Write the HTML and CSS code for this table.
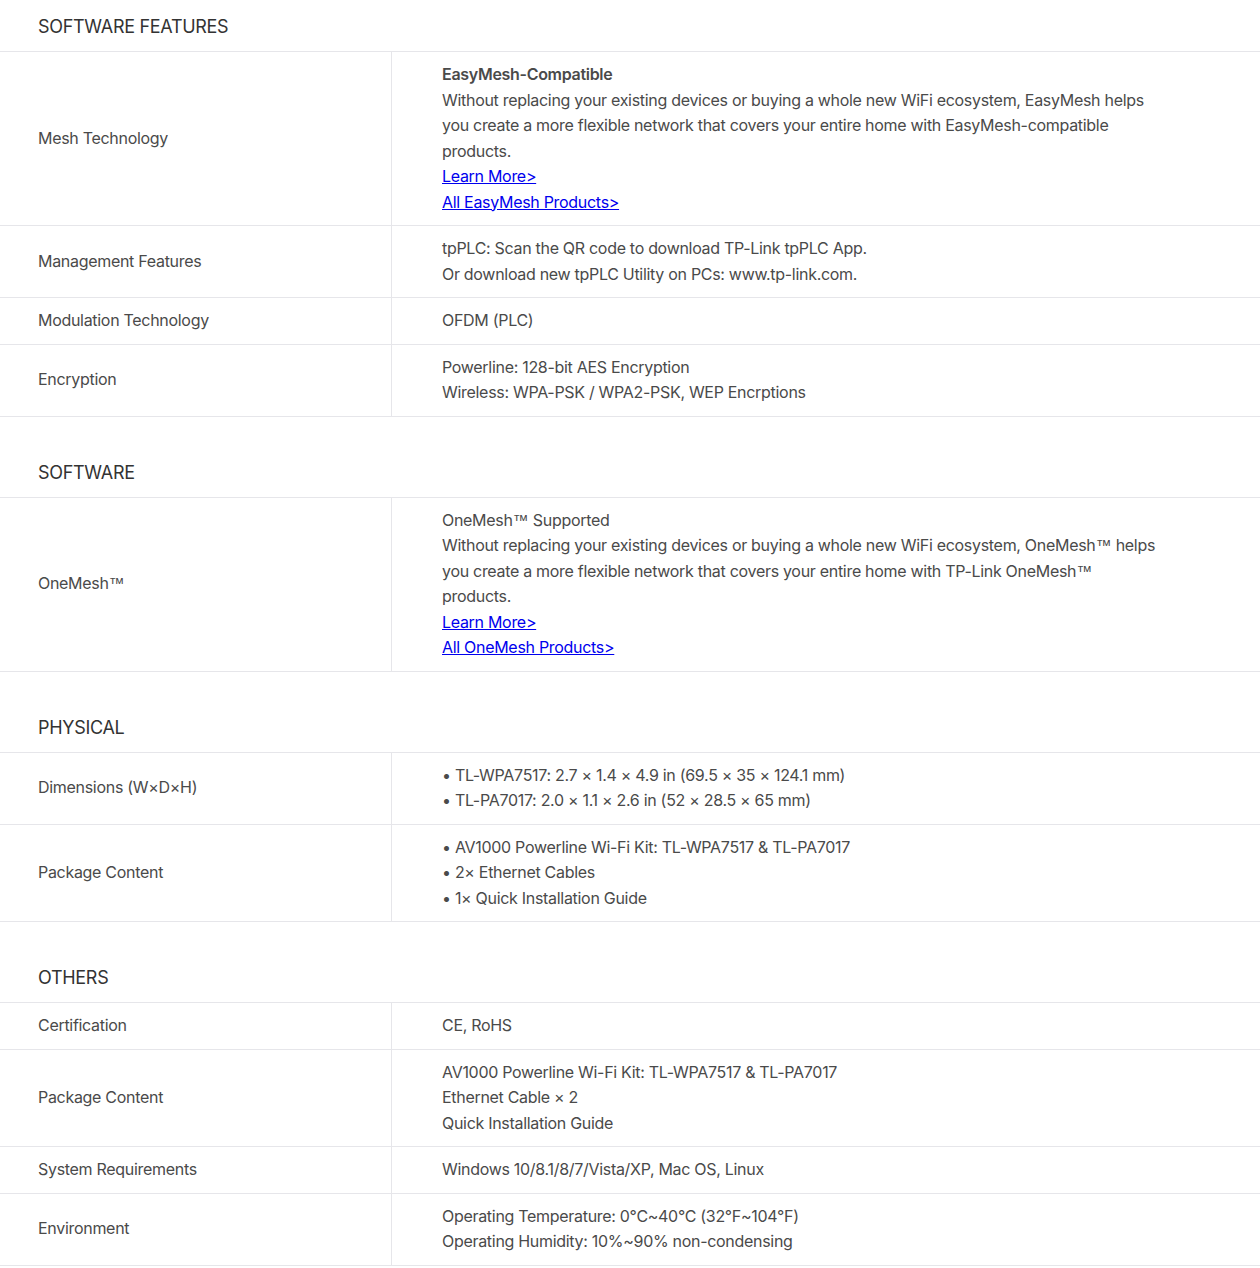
FILE: index.html
```html
<!DOCTYPE html>
<html lang="en">
<head>
    <meta charset="UTF-8">
    <meta name="viewport" content="width=device-width, initial-scale=1.0">
    <title>Specifications</title>
    <link rel="stylesheet" href="styles.css">
</head>
<body>
    <div class="specs">
        <section class="spec-group">
            <h3>SOFTWARE FEATURES</h3>
            <div class="spec-table">
                <div class="spec-row">
                    <div class="spec-name">Mesh Technology</div>
                    <div class="spec-value">
                        <strong>EasyMesh-Compatible</strong><br>
                        Without replacing your existing devices or buying a whole new WiFi ecosystem, EasyMesh helps you create a more flexible network that covers your entire home with EasyMesh-compatible products.<br>
                        <a href="#">Learn More&gt;</a><br>
                        <a href="#">All EasyMesh Products&gt;</a>
                    </div>
                </div>
                <div class="spec-row">
                    <div class="spec-name">Management Features</div>
                    <div class="spec-value">
                        tpPLC: Scan the QR code to download TP-Link tpPLC App.<br>
                        Or download new tpPLC Utility on PCs: www.tp-link.com.
                    </div>
                </div>
                <div class="spec-row">
                    <div class="spec-name">Modulation Technology</div>
                    <div class="spec-value">OFDM (PLC)</div>
                </div>
                <div class="spec-row">
                    <div class="spec-name">Encryption</div>
                    <div class="spec-value">
                        Powerline: 128-bit AES Encryption<br>
                        Wireless: WPA-PSK / WPA2-PSK, WEP Encrptions
                    </div>
                </div>
            </div>
        </section>

        <section class="spec-group">
            <h3>SOFTWARE</h3>
            <div class="spec-table">
                <div class="spec-row">
                    <div class="spec-name">OneMesh<span class="tm">™</span></div>
                    <div class="spec-value">
                        OneMesh<span class="tm">™</span> Supported<br>
                        Without replacing your existing devices or buying a whole new WiFi ecosystem, OneMesh<span class="tm">™</span> helps you create a more flexible network that covers your entire home with TP-Link OneMesh<span class="tm">™</span> products.<br>
                        <a href="#">Learn More&gt;</a><br>
                        <a href="#">All OneMesh Products&gt;</a>
                    </div>
                </div>
            </div>
        </section>

        <section class="spec-group">
            <h3>PHYSICAL</h3>
            <div class="spec-table">
                <div class="spec-row">
                    <div class="spec-name">Dimensions (W×D×H)</div>
                    <div class="spec-value">
                        • TL-WPA7517: 2.7 × 1.4 × 4.9 in (69.5 × 35 × 124.1 mm)<br>
                        • TL-PA7017: 2.0 × 1.1 × 2.6 in (52 × 28.5 × 65 mm)
                    </div>
                </div>
                <div class="spec-row">
                    <div class="spec-name">Package Content</div>
                    <div class="spec-value">
                        • AV1000 Powerline Wi-Fi Kit: TL-WPA7517 &amp; TL-PA7017<br>
                        • 2× Ethernet Cables<br>
                        • 1× Quick Installation Guide
                    </div>
                </div>
            </div>
        </section>

        <section class="spec-group">
            <h3>OTHERS</h3>
            <div class="spec-table">
                <div class="spec-row">
                    <div class="spec-name">Certification</div>
                    <div class="spec-value">CE, RoHS</div>
                </div>
                <div class="spec-row">
                    <div class="spec-name">Package Content</div>
                    <div class="spec-value">
                        AV1000 Powerline Wi-Fi Kit: TL-WPA7517 &amp; TL-PA7017<br>
                        Ethernet Cable × 2<br>
                        Quick Installation Guide
                    </div>
                </div>
                <div class="spec-row">
                    <div class="spec-name">System Requirements</div>
                    <div class="spec-value">Windows 10/8.1/8/7/Vista/XP, Mac OS, Linux</div>
                </div>
                <div class="spec-row">
                    <div class="spec-name">Environment</div>
                    <div class="spec-value">
                        Operating Temperature: 0°C~40°C (32°F~104°F)<br>
                        Operating Humidity: 10%~90% non-condensing
                    </div>
                </div>
            </div>
        </section>
    </div>
</body>
</html>
```

FILE: styles.css
```css
body {
    font-family: Inter, "Noto Sans", sans-serif;
    font-size: 16px;
    letter-spacing: -0.3px;
    color: #4a4a4a;
    background: #fff;
    margin: 0;
    padding: 0;
}

.spec-group + .spec-group {
    margin-top: 29px;
}

.spec-group h3 {
    margin: 0;
    padding: 13px 0 11px 38px;
    font-size: 18px;
    line-height: 27px;
    font-weight: 400;
    color: #333;
}

.spec-table {
    border-top: 1px solid #e6e6ea;
}

.spec-row {
    display: grid;
    grid-template-columns: 392px 1fr;
    border-bottom: 1px solid #e6e6ea;
    line-height: 25.5px;
}

.spec-name {
    display: flex;
    align-items: center;
    padding: 10px 0 10px 38px;
    border-right: 1px solid #e6e6ea;
}

.spec-value {
    padding: 10px 100px 10px 50px;
}

.spec-value strong {
    font-weight: 600;
}

.spec-value a {
    color: #0000ee;
    text-decoration: underline;
}

.tm {
    font-family: "Liberation Sans", Arial, sans-serif;
    font-size: 16px;
    line-height: 1;
    letter-spacing: 0;
}
```
